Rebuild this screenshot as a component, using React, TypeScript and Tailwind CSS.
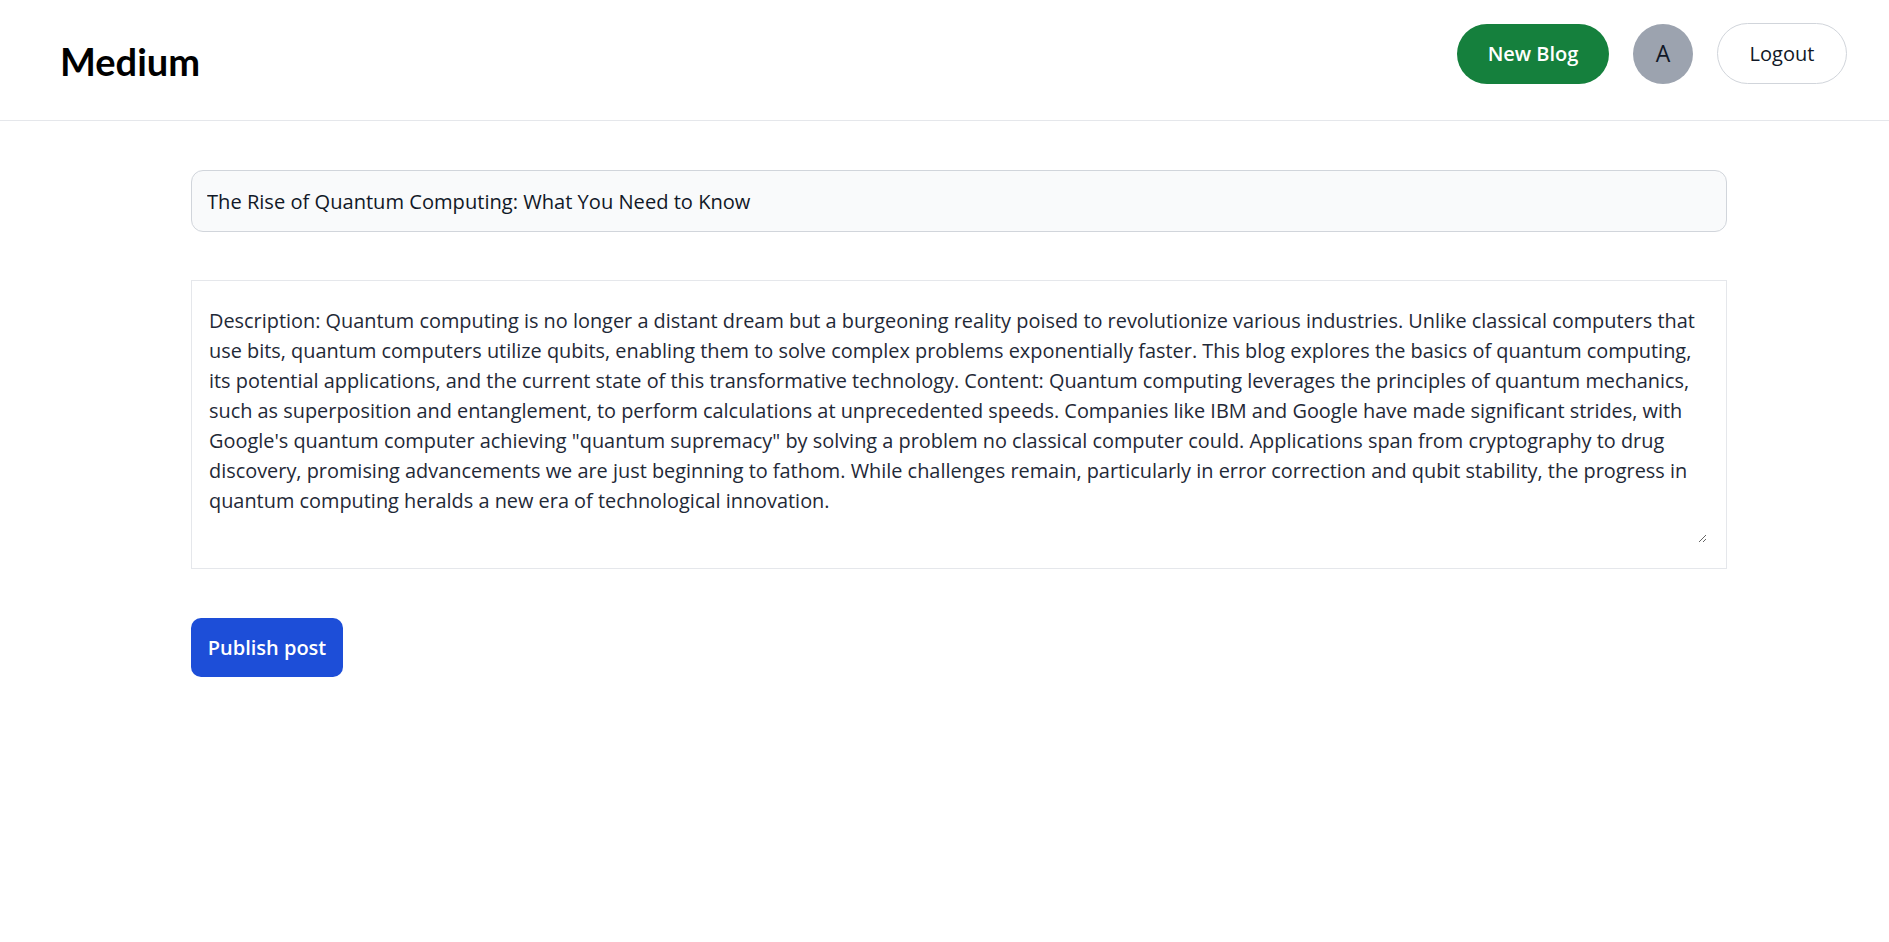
import React from "react";

const description =
  'Description: Quantum computing is no longer a distant dream but a burgeoning reality poised to revolutionize various industries. Unlike classical computers that use bits, quantum computers utilize qubits, enabling them to solve complex problems exponentially faster. This blog explores the basics of quantum computing, its potential applications, and the current state of this transformative technology. Content: Quantum computing leverages the principles of quantum mechanics, such as superposition and entanglement, to perform calculations at unprecedented speeds. Companies like IBM and Google have made significant strides, with Google\'s quantum computer achieving "quantum supremacy" by solving a problem no classical computer could. Applications span from cryptography to drug discovery, promising advancements we are just beginning to fathom. While challenges remain, particularly in error correction and qubit stability, the progress in quantum computing heralds a new era of technological innovation.';

export default function App() {
  return (
    <div className="min-h-screen bg-white font-['Open_Sans',sans-serif] text-[#111827]">
      <header className="flex h-[121px] items-start justify-between border-b border-[#e5e7eb] pl-[60px] pr-[42px]">
        <div className="pt-[42px] font-['Lato',sans-serif] text-[38px] font-bold leading-[38px] text-black">
          Medium
        </div>
        <div className="flex items-center gap-[24px] pt-[23px]">
          <button className="flex h-[60px] w-[152px] items-center justify-center rounded-full bg-[#15803d] text-[20px] font-semibold text-white">
            New Blog
          </button>
          <div className="flex h-[60px] w-[60px] items-center justify-center rounded-full bg-[#9ca3af] text-[23px] text-[#111827]">
            A
          </div>
          <button className="flex h-[61px] w-[130px] items-center justify-center rounded-full border border-[#d1d5db] bg-white text-[20px] font-medium text-[#111827]">
            Logout
          </button>
        </div>
      </header>

      <main className="ml-[191px] w-[1536px] pt-[49px]">
        <input
          type="text"
          defaultValue="The Rise of Quantum Computing: What You Need to Know"
          className="block h-[62px] w-full rounded-[12px] border border-[#d1d5db] bg-[#f9fafb] px-[15px] text-[20.1px] text-[#111827] outline-none"
        />
        <div className="mt-[48px] h-[289px] w-full border border-[#e5e7eb] bg-white pb-[25px] pl-[17px] pr-[19px] pt-[25px]">
          <textarea
            defaultValue={description}
            className="block h-full w-full border-0 bg-white p-0 text-[19.9px] leading-[30px] text-[#1f2937] outline-none"
          />
        </div>
        <button className="mt-[49px] flex h-[59px] w-[152px] items-center justify-center rounded-[10px] bg-[#1d4ed8] text-[20px] font-semibold text-white">
          Publish post
        </button>
      </main>
    </div>
  );
}
